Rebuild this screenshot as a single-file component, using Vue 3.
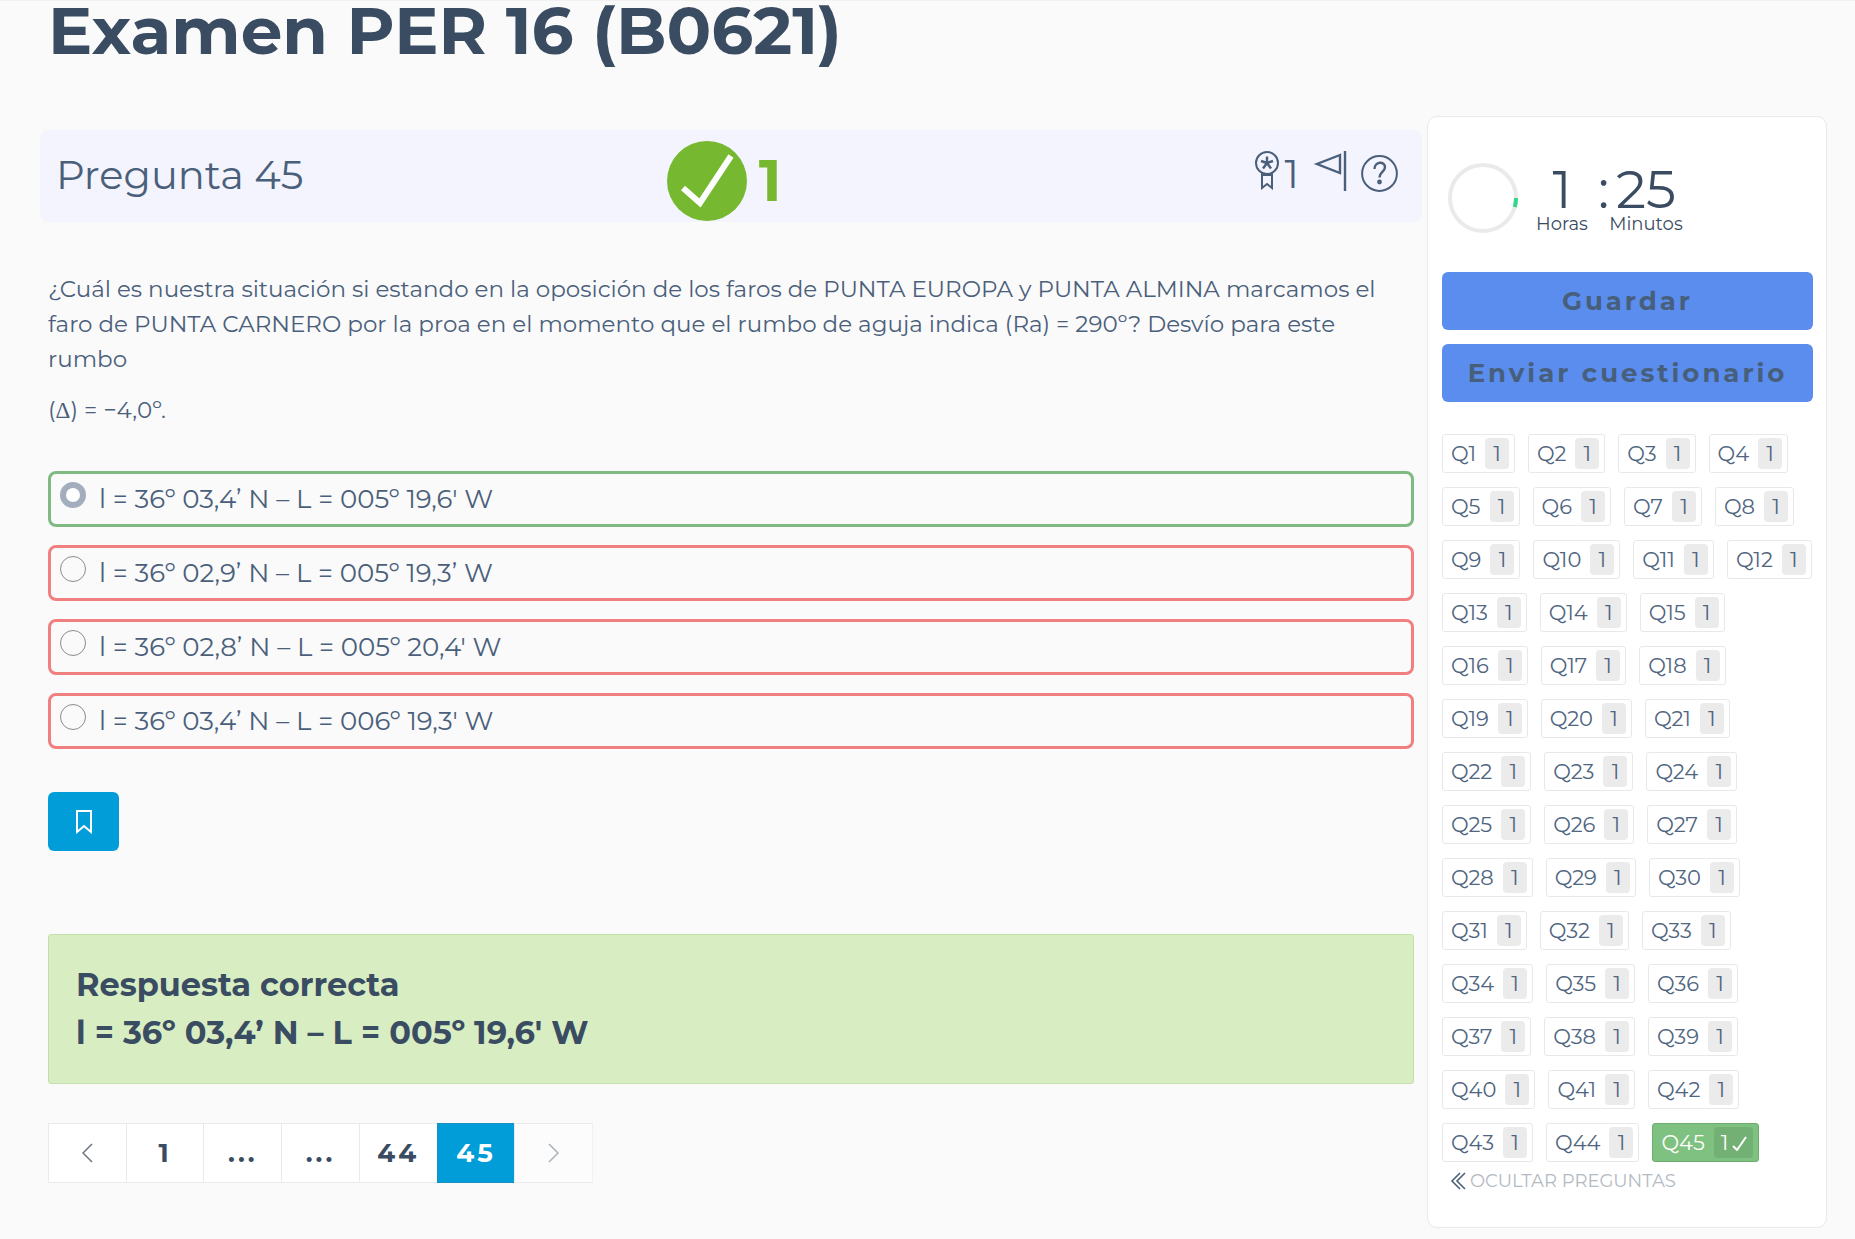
<script setup>
import { ref } from 'vue'

const selected = ref(0)
const options = [
  { text: "l = 36º 03,4’ N – L = 005º 19,6' W", correct: true },
  { text: 'l = 36º 02,9’ N – L = 005º 19,3’ W', correct: false },
  { text: "l = 36º 02,8’ N – L = 005º 20,4' W", correct: false },
  { text: "l = 36º 03,4’ N – L = 006º 19,3' W", correct: false },
]

// Rows of the question navigator: four short labels per row up to Q12, then three.
const rows = []
for (let n = 1; n <= 45;) {
  const size = n < 13 ? 4 : 3
  rows.push(Array.from({ length: size }, (_, i) => n + i))
  n += size
}
</script>

<template>
  <div class="page">
    <h1>Examen PER 16 (B0621)</h1>
    <div class="columns">
      <main>
        <header class="question-bar">
          <h2>Pregunta 45</h2>
          <div class="score">
            <svg width="80" height="80" viewBox="0 0 80 80" aria-hidden="true">
              <circle cx="40" cy="40" r="40" fill="#76b82f" />
              <path d="M16 47L33 62L64 15" fill="none" stroke="#fff" stroke-width="6" />
            </svg>
            <strong>1</strong>
          </div>
          <div class="tools">
            <svg width="24" height="39" viewBox="0 0 24 39" fill="none" stroke="#4a607a" stroke-width="2" aria-hidden="true">
              <circle cx="12" cy="12" r="11" />
              <path d="M12 12V5.500M12 12l6-2M12 12l4 5.500M12 12l-4 5.500M12 12l-6-2" stroke-width="2.400" />
              <path d="M7 22v15l5-4 5 4V22M7 24h10" />
            </svg>
            <span class="points">1</span>
            <svg class="flag" width="34" height="40" viewBox="0 0 34 40" fill="none" stroke="#4a607a" stroke-width="2.400" aria-hidden="true">
              <path d="M27 4L4 13l23 9zM32 0v40" />
            </svg>
            <svg class="help" width="37" height="37" viewBox="0 0 37 37" fill="none" stroke="#4a607a" stroke-width="2" aria-hidden="true">
              <circle cx="18.500" cy="18.500" r="17.400" />
              <path d="M13.500 14c0-8 10.500-8 10.500-2 0 5-5.500 5-5.500 10.500" stroke-width="2.400" />
              <circle cx="18.500" cy="27" r="1.400" fill="#4a607a" />
            </svg>
          </div>
        </header>

        <div class="body">
          <div class="statement">
            <p>
              ¿Cuál es nuestra situación si estando en la oposición de los faros de PUNTA EUROPA y PUNTA ALMINA marcamos el
              faro de PUNTA CARNERO por la proa en el momento que el rumbo de aguja indica (Ra) = 290º? Desvío para este
              rumbo
            </p>
            <p>(<span class="delta">Δ</span>) = −4,0º.</p>
          </div>

          <div class="options">
            <label v-for="(o, i) in options" :key="i" class="option" :class="{ correct: o.correct }">
              <input v-model="selected" type="radio" name="answer" :value="i" />
              <span>{{ o.text }}</span>
            </label>
          </div>

          <button class="bookmark" type="button" aria-label="Marcar pregunta">
            <svg width="16" height="24" viewBox="0 0 16 24" fill="none" stroke="#fff" stroke-width="2">
              <path d="M1 1h14v21l-7-6-7 6z" />
            </svg>
          </button>

          <section class="answer">
            <h3>Respuesta correcta</h3>
            <h3>l = 36º 03,4’ N – L = 005º 19,6' W</h3>
          </section>

          <nav class="pager">
            <button type="button" aria-label="Anterior">
              <svg width="11" height="20" viewBox="0 0 11 20" fill="none" stroke="#6b7580" stroke-width="1.500"><path d="M10 1L1 10l9 9" /></svg>
            </button>
            <button type="button">1</button>
            <button type="button">...</button>
            <button type="button">...</button>
            <button type="button">44</button>
            <button type="button" class="current">45</button>
            <button type="button" class="off" aria-label="Siguiente">
              <svg width="11" height="20" viewBox="0 0 11 20" fill="none" stroke="#a9b0b8" stroke-width="1.500"><path d="M1 1l9 9-9 9" /></svg>
            </button>
          </nav>
        </div>
      </main>

      <aside>
        <div class="timer">
          <svg width="70" height="70" viewBox="0 0 70 70" fill="none" stroke-width="4" aria-hidden="true">
            <circle cx="35" cy="35" r="33" stroke="#eaeaea" />
            <path d="M68 35a33 33 0 0 1-1.200 9" stroke="#33d68a" />
          </svg>
          <div class="unit hours"><b>1</b><small>Horas</small></div>
          <b class="colon">:</b>
          <div class="unit minutes"><b>25</b><small>Minutos</small></div>
        </div>
        <div class="actions">
          <button type="button">Guardar</button>
          <button type="button">Enviar cuestionario</button>
        </div>
        <div class="navigator">
          <div v-for="row in rows" :key="row[0]" class="row">
            <button v-for="n in row" :key="n" type="button" class="chip" :class="{ done: n === 45 }">
              Q{{ n }}
              <span class="badge">1<svg v-if="n === 45" width="15" height="16" viewBox="0 0 15 16" fill="none" stroke="#fff" stroke-width="2"><path d="M1 11l4 4L14 2" /></svg></span>
            </button>
          </div>
        </div>
        <a class="toggle" href="#">
          <svg width="16" height="18" viewBox="0 0 16 18" fill="none" stroke="#4a607a" stroke-width="1.600"><path d="M10 1L2 9l8 8M15 1L7 9l8 8" /></svg>
          OCULTAR PREGUNTAS
        </a>
      </aside>
    </div>
  </div>
</template>

<style>
body {
  background: #fafafa;
}
</style>

<style scoped>
.page {
  box-sizing: border-box;
  border-top: 1px solid #f2f2f2;
  padding: 0 28px 10px 40px;
  font-family: Montserrat, Inter, "Noto Sans", sans-serif;
  color: #4a607a;
}
* {
  box-sizing: border-box;
}
h1, h2, h3, p {
  margin: 0;
}
button {
  font-family: inherit;
  cursor: pointer;
}
h1 {
  padding-left: 8px;
  height: 115px;
  font-size: 66px;
  line-height: 60px;
  font-weight: 700;
  color: #3a4c62;
}
.columns {
  display: flex;
  align-items: flex-start;
  gap: 5px;
}
main {
  flex: 1;
  min-width: 0;
  padding-top: 14px;
}
.question-bar {
  display: grid;
  grid-template-columns: 1fr auto 1fr;
  height: 92px;
  padding: 0 24px 0 16px;
  border-radius: 8px;
  background: #f4f4ff;
}
h2 {
  font-size: 40px;
  line-height: 90px;
  font-weight: 400;
}
.score {
  display: flex;
  align-items: center;
  gap: 12px;
  padding: 10px 6px 0 0;
  color: #76b82f;
}
.score strong {
  font-size: 58px;
  line-height: 80px;
}
.tools {
  display: flex;
  justify-content: flex-end;
  padding-top: 21px;
}
.points {
  margin: 0 14px 0 6px;
  font-size: 40px;
  line-height: 46px;
  font-weight: 400;
}
.help {
  margin: 4px 0 0 14px;
}
.body {
  padding: 50px 8px 0;
}
.statement {
  font-size: 23px;
  line-height: 35px;
}
.statement p {
  margin-bottom: 16px;
}
.delta {
  font-family: "Liberation Serif", serif;
}
.options {
  display: flex;
  flex-direction: column;
  gap: 18px;
  padding-top: 27px;
}
.option {
  display: flex;
  gap: 13px;
  height: 56px;
  padding: 8px 9px;
  border: 3px solid #f08080;
  border-radius: 8px;
  font-size: 26px;
  line-height: 34px;
}
.option.correct {
  border-color: #81b982;
}
.option input {
  appearance: none;
  width: 26px;
  height: 26px;
  margin: 0;
  border: 1px solid #8c8c8c;
  border-radius: 50%;
}
.option input:checked {
  border: 6px solid #a2aebd;
  background: #fff;
}
.bookmark {
  display: flex;
  align-items: center;
  justify-content: center;
  width: 71px;
  height: 59px;
  margin-top: 43px;
  border: 0;
  border-radius: 6px;
  background: #009dd9;
}
.answer {
  margin-top: 83px;
  padding: 26px 27px;
  border: 1px solid #c1dfa8;
  border-radius: 3px;
  background: #d8eec2;
  color: #3a4c62;
}
.answer h3 {
  font-size: 32px;
  line-height: 48px;
}
.pager {
  display: flex;
  width: 545px;
  margin-top: 39px;
}
.pager button {
  flex: 1;
  display: flex;
  align-items: center;
  justify-content: center;
  height: 60px;
  padding: 0;
  border: 1px solid #e8eaed;
  border-right: 0;
  background: #fff;
  font-size: 26px;
  font-weight: 700;
  letter-spacing: 3px;
  color: #3a4c62;
}
.pager button.current {
  border-color: #1a90c2;
  background: #009dd9;
  color: #fff;
}
.pager button.off {
  border-right: 1px solid #f0f1f3;
  background: #fcfcfc;
}
aside {
  width: 400px;
  padding: 46px 13px 34px 14px;
  border: 1px solid #e7e9eb;
  border-radius: 10px;
  background: #fff;
}
.timer {
  display: flex;
  height: 109px;
  padding-left: 6px;
  color: #3a4c62;
}
.timer b {
  font-size: 53px;
  line-height: 53px;
  font-weight: 400;
}
.unit {
  display: flex;
  flex-direction: column;
  align-items: center;
}
.unit small {
  font-size: 18px;
  line-height: 16px;
}
.hours {
  margin-left: 17px;
  width: 54px;
}
.colon {
  width: 10px;
  margin-left: 9px;
}
.minutes {
  width: 76px;
}
.actions {
  display: flex;
  flex-direction: column;
  gap: 14px;
}
.actions button {
  height: 58px;
  padding: 0;
  border: 0;
  border-radius: 6px;
  background: #5a8dee;
  color: #475f7b;
  font-size: 26px;
  font-weight: 700;
  letter-spacing: 3px;
}
.navigator {
  display: flex;
  flex-direction: column;
  gap: 14px;
  padding-top: 32px;
}
.row {
  display: flex;
  gap: 13px;
}
.chip {
  display: flex;
  align-items: center;
  gap: 9px;
  height: 39px;
  padding: 0 5px 0 8px;
  border: 1px solid #e6e8ea;
  border-radius: 3px;
  background: #fff;
  color: #4f6580;
  font-size: 21px;
}
.badge {
  display: flex;
  align-items: center;
  justify-content: center;
  gap: 4px;
  min-width: 24px;
  height: 31px;
  border-radius: 4px;
  background: #ebebeb;
}
.chip.done {
  border-color: #6dae6f;
  background: #7fc180;
  color: #fff;
}
.done .badge {
  padding: 0 6px 0 7px;
  background: #73b074;
}
.toggle {
  display: flex;
  align-items: center;
  gap: 4px;
  margin: 7px 0 0 8px;
  font-size: 18px;
  line-height: 24px;
  color: #b3bac2;
  text-decoration: none;
}
</style>
